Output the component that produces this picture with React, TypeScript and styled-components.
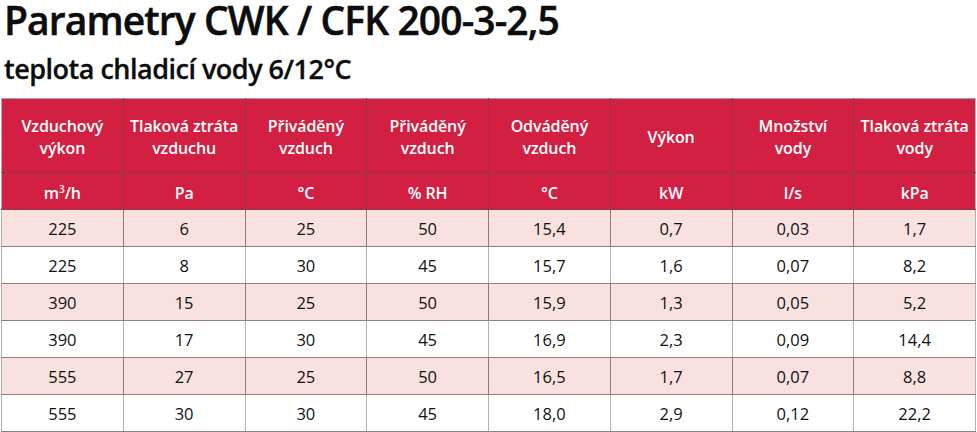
import React from 'react';
import styled, { createGlobalStyle } from 'styled-components';

const GlobalStyle = createGlobalStyle`
  html, body {
    margin: 0;
    padding: 0;
    background: #fff;
  }
  body {
    font-family: "Open Sans", "Noto Sans", sans-serif;
  }
`;

const headers = [
  { label: ['Vzduchový', 'výkon'], unit: <>m<sup>3</sup>/h</> },
  { label: ['Tlaková ztráta', 'vzduchu'], unit: 'Pa' },
  { label: ['Přiváděný', 'vzduch'], unit: '°C' },
  { label: ['Přiváděný', 'vzduch'], unit: '% RH' },
  { label: ['Odváděný', 'vzduch'], unit: '°C' },
  { label: ['Výkon'], unit: 'kW' },
  { label: ['Množství', 'vody'], unit: 'l/s' },
  { label: ['Tlaková ztráta', 'vody'], unit: 'kPa' },
];

const rows = [
  ['225', '6', '25', '50', '15,4', '0,7', '0,03', '1,7'],
  ['225', '8', '30', '45', '15,7', '1,6', '0,07', '8,2'],
  ['390', '15', '25', '50', '15,9', '1,3', '0,05', '5,2'],
  ['390', '17', '30', '45', '16,9', '2,3', '0,09', '14,4'],
  ['555', '27', '25', '50', '16,5', '1,7', '0,07', '8,8'],
  ['555', '30', '30', '45', '18,0', '2,9', '0,12', '22,2'],
];

function App() {
  return (
    <Styled.Page>
      <GlobalStyle />
      <Styled.Title>Parametry CWK / CFK 200-3-2,5</Styled.Title>
      <Styled.Subtitle>teplota chladicí vody 6/12°C</Styled.Subtitle>
      <Styled.Table>
        <thead>
          <tr>
            {headers.map((h, i) => (
              <Styled.HeadCell key={i} $tall>
                {h.label.map((line, j) => (
                  <div key={j}>{line}</div>
                ))}
              </Styled.HeadCell>
            ))}
          </tr>
          <tr>
            {headers.map((h, i) => (
              <Styled.HeadCell key={i}>{h.unit}</Styled.HeadCell>
            ))}
          </tr>
        </thead>
        <tbody>
          {rows.map((row, i) => (
            <Styled.Row key={i} $shaded={i % 2 === 0}>
              {row.map((v, j) => (
                <Styled.Cell key={j}>{v}</Styled.Cell>
              ))}
            </Styled.Row>
          ))}
        </tbody>
      </Styled.Table>
    </Styled.Page>
  );
}

const Styled = {
  Page: styled.div`
    width: 977px;
    height: 432px;
    overflow: hidden;
  `,
  Title: styled.h1`
    margin: 0;
    padding: 0 0 0 4px;
    font-size: 39px;
    line-height: 40px;
    font-weight: 600;
    color: #0d0d0d;
    letter-spacing: -0.9px;
    -webkit-text-stroke: 0.5px #0d0d0d;
    white-space: nowrap;
  `,
  Subtitle: styled.h2`
    margin: 10px 0 11px;
    padding-left: 4px;
    font-size: 27px;
    line-height: 37px;
    font-weight: 600;
    color: #0d0d0d;
    letter-spacing: -0.5px;
    -webkit-text-stroke: 0.3px #0d0d0d;
    white-space: nowrap;
  `,
  Table: styled.table`
    margin-left: 1px;
    width: 975px;
    border-collapse: collapse;
    table-layout: fixed;
    border-top: 1px solid #a9a4a4;
    border-left: 1px solid #b0b0b0;
    border-right: 1px solid #b0b0b0;
  `,
  HeadCell: styled.th<{ $tall?: boolean }>`
    height: ${(p) => (p.$tall ? 70 : 32)}px;
    padding: ${(p) => (p.$tall ? '3px 1px 0' : '4px 1px 0')};
    background: #d21f42;
    color: #fff;
    font-size: 16px;
    font-weight: 600;
    line-height: 22px;
    text-align: center;
    vertical-align: middle;
    border-right: 1px solid #8c3a45;
    border-bottom: 1px solid #8c3a45;
    white-space: nowrap;
    letter-spacing: -0.1px;
    &:last-child {
      border-right: none;
    }
    sup {
      font-size: 10px;
      line-height: 0;
      vertical-align: 6px;
    }
  `,
  Row: styled.tr<{ $shaded: boolean }>`
    background: ${(p) => (p.$shaded ? '#f8e1de' : '#fff')};
    td {
      border-right: 1px solid ${(p) => (p.$shaded ? '#8e7b7b' : '#b4b4b4')};
    }
  `,
  Cell: styled.td`
    height: 36px;
    padding: 0;
    font-size: 16.5px;
    color: #111;
    text-align: center;
    vertical-align: middle;
    border-bottom: 1px solid #8e8080;
    &:last-child {
      border-right: none !important;
    }
  `,
};

export default App;
